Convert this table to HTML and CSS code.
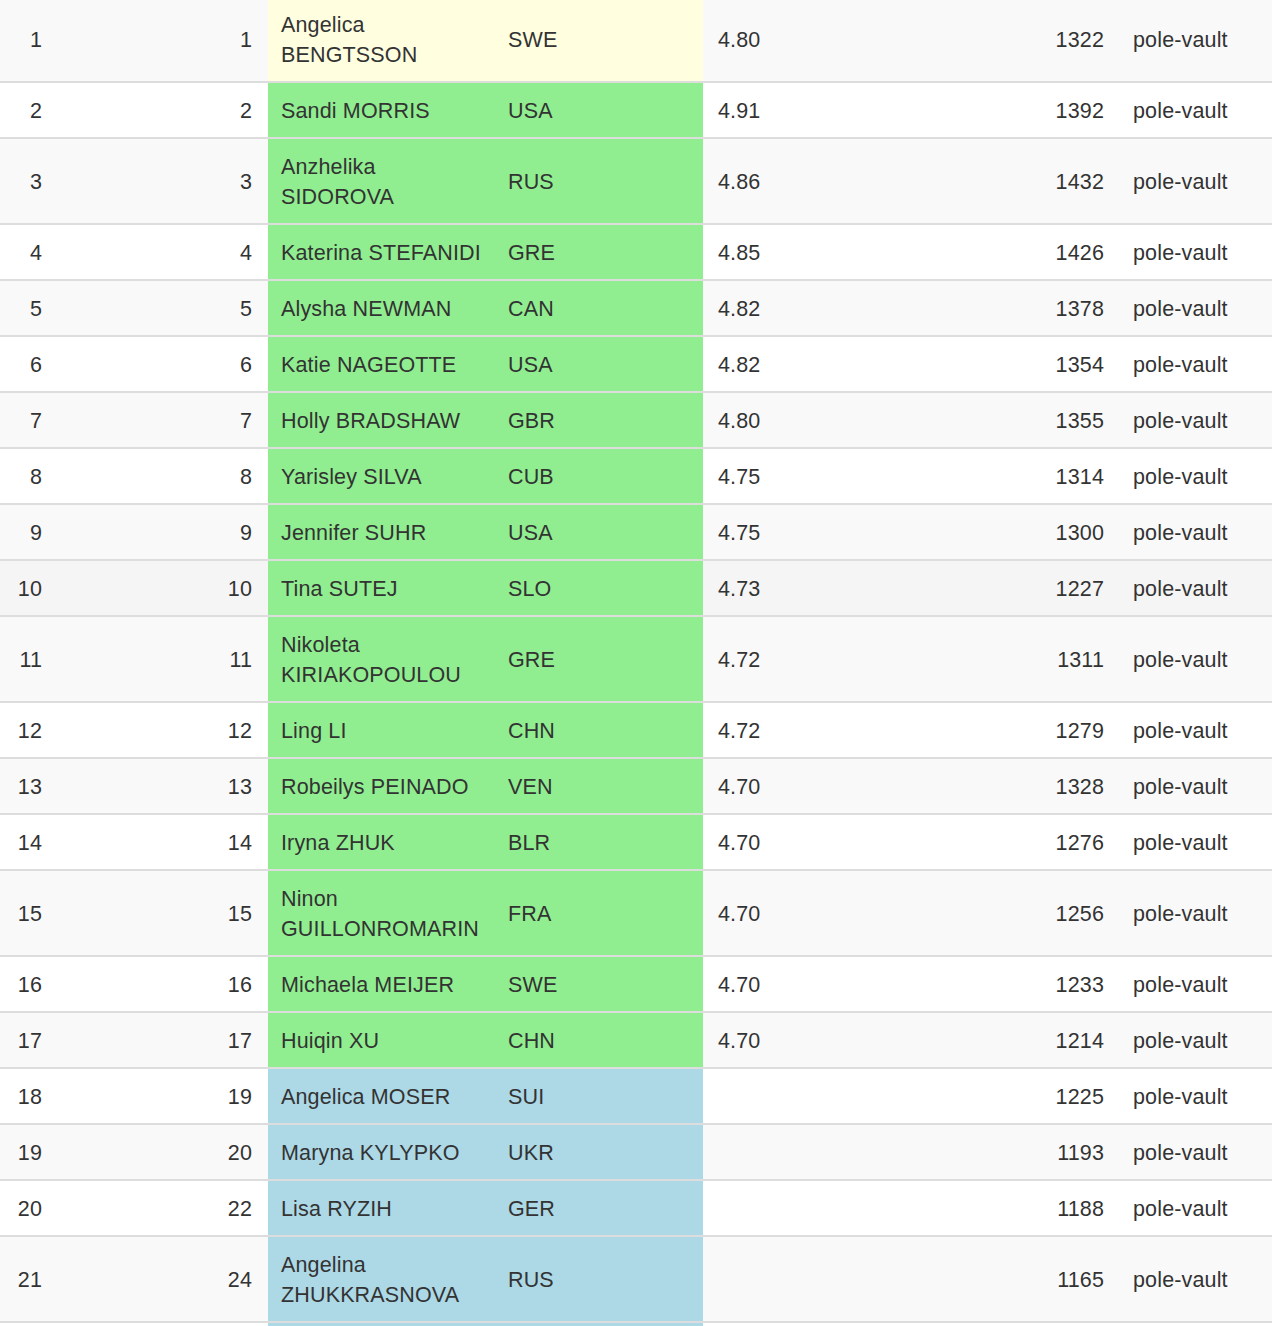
FILE: index.html
```html
<!DOCTYPE html>
<html lang="en">
<head>
<meta charset="utf-8">
<title>Pole vault ranking</title>
<link rel="stylesheet" href="styles.css">
</head>
<body>
<table class="results">
  <colgroup>
    <col class="c-pos"><col class="c-rank"><col class="c-name"><col class="c-nat"><col class="c-mark"><col class="c-pts"><col class="c-event">
  </colgroup>
  <tbody>
    <tr><td class="num">1</td><td class="num rank">1</td><td class="name q-y">Angelica BENGTSSON</td><td class="nat q-y">SWE</td><td class="mark">4.80</td><td class="num pts">1322</td><td class="event">pole-vault</td></tr>
    <tr><td class="num">2</td><td class="num rank">2</td><td class="name q-g">Sandi MORRIS</td><td class="nat q-g">USA</td><td class="mark">4.91</td><td class="num pts">1392</td><td class="event">pole-vault</td></tr>
    <tr><td class="num">3</td><td class="num rank">3</td><td class="name q-g">Anzhelika SIDOROVA</td><td class="nat q-g">RUS</td><td class="mark">4.86</td><td class="num pts">1432</td><td class="event">pole-vault</td></tr>
    <tr><td class="num">4</td><td class="num rank">4</td><td class="name q-g">Katerina STEFANIDI</td><td class="nat q-g">GRE</td><td class="mark">4.85</td><td class="num pts">1426</td><td class="event">pole-vault</td></tr>
    <tr><td class="num">5</td><td class="num rank">5</td><td class="name q-g">Alysha NEWMAN</td><td class="nat q-g">CAN</td><td class="mark">4.82</td><td class="num pts">1378</td><td class="event">pole-vault</td></tr>
    <tr><td class="num">6</td><td class="num rank">6</td><td class="name q-g">Katie NAGEOTTE</td><td class="nat q-g">USA</td><td class="mark">4.82</td><td class="num pts">1354</td><td class="event">pole-vault</td></tr>
    <tr><td class="num">7</td><td class="num rank">7</td><td class="name q-g">Holly BRADSHAW</td><td class="nat q-g">GBR</td><td class="mark">4.80</td><td class="num pts">1355</td><td class="event">pole-vault</td></tr>
    <tr><td class="num">8</td><td class="num rank">8</td><td class="name q-g">Yarisley SILVA</td><td class="nat q-g">CUB</td><td class="mark">4.75</td><td class="num pts">1314</td><td class="event">pole-vault</td></tr>
    <tr><td class="num">9</td><td class="num rank">9</td><td class="name q-g">Jennifer SUHR</td><td class="nat q-g">USA</td><td class="mark">4.75</td><td class="num pts">1300</td><td class="event">pole-vault</td></tr>
    <tr class="hover"><td class="num">10</td><td class="num rank">10</td><td class="name q-g">Tina SUTEJ</td><td class="nat q-g">SLO</td><td class="mark">4.73</td><td class="num pts">1227</td><td class="event">pole-vault</td></tr>
    <tr><td class="num">11</td><td class="num rank">11</td><td class="name q-g">Nikoleta KIRIAKOPOULOU</td><td class="nat q-g">GRE</td><td class="mark">4.72</td><td class="num pts">1311</td><td class="event">pole-vault</td></tr>
    <tr><td class="num">12</td><td class="num rank">12</td><td class="name q-g">Ling LI</td><td class="nat q-g">CHN</td><td class="mark">4.72</td><td class="num pts">1279</td><td class="event">pole-vault</td></tr>
    <tr><td class="num">13</td><td class="num rank">13</td><td class="name q-g">Robeilys PEINADO</td><td class="nat q-g">VEN</td><td class="mark">4.70</td><td class="num pts">1328</td><td class="event">pole-vault</td></tr>
    <tr><td class="num">14</td><td class="num rank">14</td><td class="name q-g">Iryna ZHUK</td><td class="nat q-g">BLR</td><td class="mark">4.70</td><td class="num pts">1276</td><td class="event">pole-vault</td></tr>
    <tr><td class="num">15</td><td class="num rank">15</td><td class="name q-g">Ninon GUILLONROMARIN</td><td class="nat q-g">FRA</td><td class="mark">4.70</td><td class="num pts">1256</td><td class="event">pole-vault</td></tr>
    <tr><td class="num">16</td><td class="num rank">16</td><td class="name q-g">Michaela MEIJER</td><td class="nat q-g">SWE</td><td class="mark">4.70</td><td class="num pts">1233</td><td class="event">pole-vault</td></tr>
    <tr><td class="num">17</td><td class="num rank">17</td><td class="name q-g">Huiqin XU</td><td class="nat q-g">CHN</td><td class="mark">4.70</td><td class="num pts">1214</td><td class="event">pole-vault</td></tr>
    <tr><td class="num">18</td><td class="num rank">19</td><td class="name q-b">Angelica MOSER</td><td class="nat q-b">SUI</td><td class="mark"></td><td class="num pts">1225</td><td class="event">pole-vault</td></tr>
    <tr><td class="num">19</td><td class="num rank">20</td><td class="name q-b">Maryna KYLYPKO</td><td class="nat q-b">UKR</td><td class="mark"></td><td class="num pts">1193</td><td class="event">pole-vault</td></tr>
    <tr><td class="num">20</td><td class="num rank">22</td><td class="name q-b">Lisa RYZIH</td><td class="nat q-b">GER</td><td class="mark"></td><td class="num pts">1188</td><td class="event">pole-vault</td></tr>
    <tr><td class="num">21</td><td class="num rank">24</td><td class="name q-b">Angelina ZHUKKRASNOVA</td><td class="nat q-b">RUS</td><td class="mark"></td><td class="num pts">1165</td><td class="event">pole-vault</td></tr>
    <tr><td class="num"></td><td class="num rank"></td><td class="name q-b"></td><td class="nat q-b"></td><td class="mark"></td><td class="num pts"></td><td class="event"></td></tr>
  </tbody>
</table>
</body>
</html>
```

FILE: styles.css
```css
html, body {
  margin: 0;
  padding: 0;
  background: #fff;
}

body {
  font-family: "Liberation Sans", Arial, Helvetica, sans-serif;
  font-size: 21.5px;
  line-height: 30px;
  color: #333;
  letter-spacing: 0.15px;
  overflow: hidden;
}

.results {
  width: 1272px;
  table-layout: fixed;
  border-collapse: collapse;
  border-spacing: 0;
  margin-top: -5px;
}

.c-pos { width: 56px; }
.c-rank { width: 212px; }
.c-name { width: 227px; }
.c-nat { width: 208px; }
.c-mark { width: 208px; }
.c-pts { width: 207px; }
.c-event { width: 154px; }

.results td {
  border-top: 2px solid #ddd;
  padding: 13px 14px 11px;
  vertical-align: middle;
  height: 30px;
}

.results tbody tr:nth-child(odd) {
  background: #f9f9f9;
}

.results tbody tr.hover {
  background: #f5f5f5;
}

.results td.num {
  text-align: right;
  padding-right: 14px;
  padding-left: 6px;
}

.results td.rank {
  padding-right: 16px;
}

.results td.name {
  padding-left: 13px;
  padding-right: 6px;
}

.results td.nat {
  padding-left: 13px;
}

.results td.mark {
  padding-left: 15px;
}

.results td.event {
  padding-left: 15px;
  white-space: nowrap;
}

.q-y { background: #ffffe0; }
.q-g { background: #90ee90; }
.q-b { background: #add8e6; }
```
